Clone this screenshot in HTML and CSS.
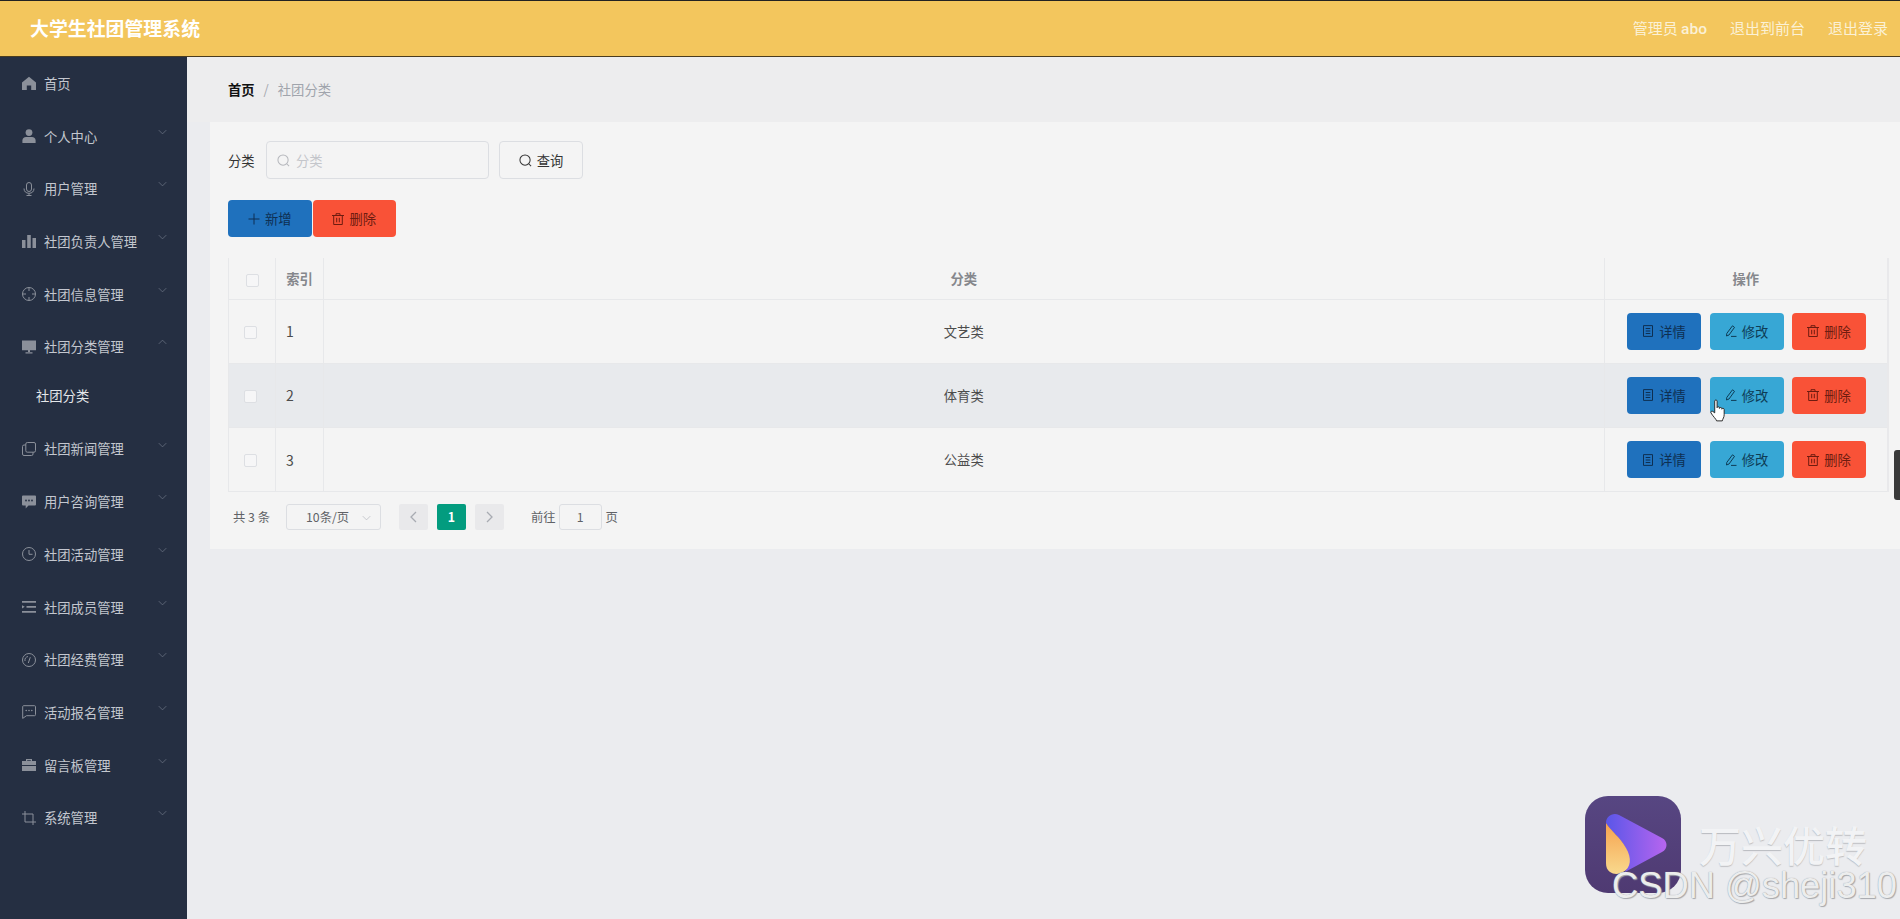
FILE: index.html
```html
<!DOCTYPE html>
<html lang="zh-CN">
<head>
  <meta charset="UTF-8" />
  <title>大学生社团管理系统</title>
  <link rel="stylesheet" href="styles.css">
</head>
<body>

  <!-- icon sprite -->
  <svg class="sprite" xmlns="http://www.w3.org/2000/svg">
    <symbol id="i-home" viewBox="0 0 14 14"><path fill="currentColor" d="M7 .8 14 6.600V14H9.200V9.400H4.800V14H0V6.600z"/></symbol>
    <symbol id="i-user" viewBox="0 0 14 14"><circle fill="currentColor" cx="7" cy="3.600" r="3.400"/><path fill="currentColor" d="M.4 14v-2.600C.4 9.400 2 8 4 8h6c2 0 3.600 1.400 3.600 3.400V14z"/></symbol>
    <symbol id="i-mic" viewBox="0 0 14 14"><g fill="none" stroke="currentColor"><rect x="4.500" y=".5" width="5" height="9" rx="2.500"/><path d="M2 6.500c0 3 2 4.800 5 4.800s5-1.800 5-4.800M7 11.300v2.200M4.500 13.500h5"/></g></symbol>
    <symbol id="i-data" viewBox="0 0 14 14"><path fill="currentColor" d="M0 6h3.500v8H0zM5.200 1h3.600v13H5.200zM10.500 4H14v10h-3.500z"/></symbol>
    <symbol id="i-aim" viewBox="0 0 14 14"><g fill="none" stroke="currentColor"><circle cx="7" cy="7" r="6.500"/><path d="M7 .5v3.500M7 10v3.500M.5 7H4M10 7h3.500"/></g></symbol>
    <symbol id="i-monitor" viewBox="0 0 14 14"><path fill="currentColor" d="M0 .5h14v9.800H0zM6 10.300h2v1.700H6zM3.500 12.300h7v1.200h-7z"/></symbol>
    <symbol id="i-copy" viewBox="0 0 14 14"><g fill="none" stroke="currentColor"><rect x="3.800" y=".5" width="9.700" height="9.700" rx="1.500"/><path d="M3.800 3H2a1.500 1.500 0 0 0-1.500 1.500V12A1.500 1.500 0 0 0 2 13.500h7.500A1.500 1.500 0 0 0 11 12v-1.800"/></g></symbol>
    <symbol id="i-chat" viewBox="0 0 14 14"><path fill="currentColor" d="M1 .5h12A1 1 0 0 1 14 1.500v8a1 1 0 0 1-1 1H6.500l-2.800 3v-3H1a1 1 0 0 1-1-1v-8A1 1 0 0 1 1 .5z"/><g fill="#252f42"><circle cx="4" cy="5.500" r=".9"/><circle cx="7" cy="5.500" r=".9"/><circle cx="10" cy="5.500" r=".9"/></g></symbol>
    <symbol id="i-clock" viewBox="0 0 14 14"><g fill="none" stroke="currentColor"><circle cx="7" cy="7" r="6.500"/><path d="M7 3v4.300h3.500"/></g></symbol>
    <symbol id="i-list" viewBox="0 0 14 14"><path fill="currentColor" d="M0 1h14v1.700H0zM4.500 6H14v1.700H4.500zM0 11h14v1.700H0zM0 5.200l2.800 1.600L0 8.500z"/></symbol>
    <symbol id="i-gauge" viewBox="0 0 14 14"><g fill="none" stroke="currentColor"><circle cx="7" cy="7" r="6.500"/><path d="M6.300 10 8.300 4.200"/><path d="M3 8a4 4 0 0 1 3-4.500"/></g></symbol>
    <symbol id="i-msg" viewBox="0 0 14 14"><path fill="none" stroke="currentColor" d="M1.500.7h11a1 1 0 0 1 1 1v8a1 1 0 0 1-1 1H4.500l-3.800 2.700V1.700a1 1 0 0 1 .8-1z"/><g fill="currentColor"><circle cx="4.200" cy="5.500" r=".8"/><circle cx="7" cy="5.500" r=".8"/><circle cx="9.800" cy="5.500" r=".8"/></g></symbol>
    <symbol id="i-case" viewBox="0 0 14 14"><path fill="currentColor" d="M4 3V1h6v2h4v4H0V3zM5.200 2.200V3h3.600v-.8zM0 8h14v5H0z"/></symbol>
    <symbol id="i-crop" viewBox="0 0 14 14"><path fill="none" stroke="currentColor" d="M3 0v11h11M0 3h11v11"/></symbol>
    <symbol id="i-arrow" viewBox="0 0 12 7"><path fill="none" stroke="currentColor" d="M1 1l5 5 5-5"/></symbol>
    <symbol id="i-prev" viewBox="0 0 7 12"><path fill="none" stroke="currentColor" stroke-width="1.300" d="M6 1 1 6l5 5"/></symbol>
    <symbol id="i-next" viewBox="0 0 7 12"><path fill="none" stroke="currentColor" stroke-width="1.300" d="M1 1l5 5-5 5"/></symbol>
    <symbol id="i-search" viewBox="0 0 14 14"><g fill="none" stroke="currentColor" stroke-width="1.100"><circle cx="6.500" cy="6.500" r="5.500"/><path d="M10.500 10.500l2.500 2.500"/></g></symbol>
    <symbol id="i-plus" viewBox="0 0 12 12"><path fill="none" stroke="currentColor" d="M6 .5v11M.5 6h11"/></symbol>
    <symbol id="i-trash" viewBox="0 0 12 12"><path fill="none" stroke="currentColor" d="M0 2.500h12M4 2.500V.7h4v1.800M1.700 2.500v9h8.600v-9M4.700 4.800v4.500M7.300 4.800v4.500"/></symbol>
    <symbol id="i-doc" viewBox="0 0 12 12"><path fill="none" stroke="currentColor" d="M1.500.6h9v10.800h-9zM3.700 3.500h4.600M3.700 6h4.600M3.700 8.500h4.600"/></symbol>
    <symbol id="i-edit" viewBox="0 0 12 12"><path fill="none" stroke="currentColor" d="M7.500.8l2 1.600L4 10 1.500 11l.3-2.600zM6 11.400h5.500"/></symbol>
  </svg>

  <!-- top bar -->
  <header class="topbar">
    <div class="brand">大学生社团管理系统</div>
    <div class="topbar-links">
      <span>管理员 <span class="admin-name">abo</span></span>
      <span>退出到前台</span>
      <span>退出登录</span>
    </div>
  </header>

  <div class="layout">

    <!-- side menu -->
    <nav class="sidebar">
      <div class="menu-item"><svg class="menu-icon"><use href="#i-home"/></svg>首页</div>
      <div class="menu-item"><svg class="menu-icon"><use href="#i-user"/></svg>个人中心<svg class="menu-arrow"><use href="#i-arrow"/></svg></div>
      <div class="menu-item"><svg class="menu-icon"><use href="#i-mic"/></svg>用户管理<svg class="menu-arrow"><use href="#i-arrow"/></svg></div>
      <div class="menu-item"><svg class="menu-icon"><use href="#i-data"/></svg>社团负责人管理<svg class="menu-arrow"><use href="#i-arrow"/></svg></div>
      <div class="menu-item"><svg class="menu-icon"><use href="#i-aim"/></svg>社团信息管理<svg class="menu-arrow"><use href="#i-arrow"/></svg></div>
      <div class="menu-item"><svg class="menu-icon"><use href="#i-monitor"/></svg>社团分类管理<svg class="menu-arrow open"><use href="#i-arrow"/></svg></div>
      <div class="submenu-item">社团分类</div>
      <div class="menu-item"><svg class="menu-icon"><use href="#i-copy"/></svg>社团新闻管理<svg class="menu-arrow"><use href="#i-arrow"/></svg></div>
      <div class="menu-item"><svg class="menu-icon"><use href="#i-chat"/></svg>用户咨询管理<svg class="menu-arrow"><use href="#i-arrow"/></svg></div>
      <div class="menu-item"><svg class="menu-icon"><use href="#i-clock"/></svg>社团活动管理<svg class="menu-arrow"><use href="#i-arrow"/></svg></div>
      <div class="menu-item"><svg class="menu-icon"><use href="#i-list"/></svg>社团成员管理<svg class="menu-arrow"><use href="#i-arrow"/></svg></div>
      <div class="menu-item"><svg class="menu-icon"><use href="#i-gauge"/></svg>社团经费管理<svg class="menu-arrow"><use href="#i-arrow"/></svg></div>
      <div class="menu-item"><svg class="menu-icon"><use href="#i-msg"/></svg>活动报名管理<svg class="menu-arrow"><use href="#i-arrow"/></svg></div>
      <div class="menu-item"><svg class="menu-icon"><use href="#i-case"/></svg>留言板管理<svg class="menu-arrow"><use href="#i-arrow"/></svg></div>
      <div class="menu-item"><svg class="menu-icon"><use href="#i-crop"/></svg>系统管理<svg class="menu-arrow"><use href="#i-arrow"/></svg></div>
    </nav>

    <main class="main">
      <div class="breadcrumb">
        <b>首页</b><span class="crumb-sep">/</span><span class="crumb-last">社团分类</span>
      </div>

      <section class="card">
        <div class="search-row">
          <label class="search-label">分类</label>
          <div class="search-input"><svg class="ico14"><use href="#i-search"/></svg>分类</div>
          <button class="search-btn"><svg class="ico14"><use href="#i-search"/></svg>查询</button>
        </div>

        <div class="action-row">
          <button class="btn btn-blue btn-top"><svg class="ico12"><use href="#i-plus"/></svg>新增</button>
          <button class="btn btn-red btn-top"><svg class="ico12"><use href="#i-trash"/></svg>删除</button>
        </div>

        <table class="grid">
          <colgroup>
            <col class="col-check"><col class="col-index"><col><col class="col-ops">
          </colgroup>
          <thead>
            <tr>
              <th><span class="check"></span></th>
              <th>索引</th>
              <th>分类</th>
              <th>操作</th>
            </tr>
          </thead>
          <tbody>
            <tr>
              <td><span class="check body-check"></span></td>
              <td class="cell-index">1</td>
              <td>文艺类</td>
              <td>
                <div class="ops">
                  <button class="btn btn-blue"><svg class="ico12"><use href="#i-doc"/></svg>详情</button>
                  <button class="btn btn-cyan"><svg class="ico12"><use href="#i-edit"/></svg>修改</button>
                  <button class="btn btn-red"><svg class="ico12"><use href="#i-trash"/></svg>删除</button>
                </div>
              </td>
            </tr>
            <tr class="row-hover">
              <td><span class="check body-check"></span></td>
              <td class="cell-index">2</td>
              <td>体育类</td>
              <td>
                <div class="ops">
                  <button class="btn btn-blue"><svg class="ico12"><use href="#i-doc"/></svg>详情</button>
                  <button class="btn btn-cyan"><svg class="ico12"><use href="#i-edit"/></svg>修改</button>
                  <button class="btn btn-red"><svg class="ico12"><use href="#i-trash"/></svg>删除</button>
                </div>
              </td>
            </tr>
            <tr>
              <td><span class="check body-check"></span></td>
              <td class="cell-index">3</td>
              <td>公益类</td>
              <td>
                <div class="ops">
                  <button class="btn btn-blue"><svg class="ico12"><use href="#i-doc"/></svg>详情</button>
                  <button class="btn btn-cyan"><svg class="ico12"><use href="#i-edit"/></svg>修改</button>
                  <button class="btn btn-red"><svg class="ico12"><use href="#i-trash"/></svg>删除</button>
                </div>
              </td>
            </tr>
          </tbody>
        </table>

        <div class="pager">
          <span class="pager-total">共 3 条</span>
          <div class="pager-size">10条/页<svg class="pager-caret"><use href="#i-arrow"/></svg></div>
          <span class="pager-btn"><svg class="pager-chevron"><use href="#i-prev"/></svg></span>
          <span class="pager-btn pager-current">1</span>
          <span class="pager-btn"><svg class="pager-chevron"><use href="#i-next"/></svg></span>
          <span class="pager-goto">前往</span>
          <span class="pager-input">1</span>
          <span>页</span>
        </div>
      </section>
    </main>
  </div>

  <!-- things lying over the page: scroll handle, mouse pointer, video watermark -->
  <div class="side-handle"></div>

  <svg class="pointer" viewBox="0 0 18 24">
    <path fill="#fff" stroke="#222" stroke-width="1" stroke-linejoin="round" d="M5 2c0-1.500 2.500-1.500 2.500 0v7c0-1.300 2.500-1.300 2.500 0v.8c0-1.300 2.500-1.300 2.500 0v.8c0-1.200 2.500-1.200 2.500.2v5.700c0 3-1.500 4-2 6.500H7c-.5-2-4-5-6-8.500-.7-1.300 1-2.500 2-1.500L5 14.500z"/>
  </svg>

  <div class="watermark">
    <svg class="wm-logo" viewBox="0 0 96 97">
      <defs>
        <linearGradient id="wm-bg" x1="0" y1="0" x2="0" y2="1"><stop offset="0" stop-color="#574682"/><stop offset="1" stop-color="#4f3a72"/></linearGradient>
        <linearGradient id="wm-play" x1="0" y1="0" x2="1" y2="0"><stop offset="0" stop-color="#5a56e8"/><stop offset="1" stop-color="#b765ef"/></linearGradient>
        <linearGradient id="wm-fold" x1="0" y1="0" x2="0" y2="1"><stop offset="0" stop-color="#f5a24f"/><stop offset="1" stop-color="#f9d98d"/></linearGradient>
      </defs>
      <rect width="96" height="97" rx="23" fill="url(#wm-bg)"/>
      <path fill="url(#wm-play)" d="M21 27c0-7 7-11 13-8l43 23c6 3 6 11 0 14L40 76c6-10 4-20-3-30-5-7-12-12-16-19z"/>
      <path fill="url(#wm-fold)" d="M21 27c5 8 14 14 20 25 6 10 5 20-3 24-3 2-9 3-13 0-3-2-4-5-4-9z"/>
    </svg>
    <div class="wm-name">万兴优转</div>
    <div class="wm-csdn">CSDN @sheji310</div>
  </div>

</body>
</html>
```

FILE: styles.css
```css
* {
  box-sizing: border-box;
}
html, body {
  height: 100%;
}
body {
  margin: 0;
  overflow: hidden;
  background: #ebecef;
  color: #444;
  font-family: "Noto Sans CJK SC", "Liberation Sans", sans-serif;
  font-size: 13.3px;
}
.sprite {
  display: none;
}

/* top bar */
.topbar {
  display: flex;
  justify-content: space-between;
  align-items: center;
  height: 57px;
  padding: 0 12px 2px 30px;
  background: #f3c65d;
  border-top: 1px solid #222;
  border-bottom: 1px solid #4a3c1e;
  color: #fff;
}
.brand {
  font-size: 18.900px;
  font-weight: bold;
}
.topbar-links {
  display: flex;
  gap: 23px;
  color: #fbf1d6;
  font-size: 15px;
}
.admin-name {
  font-family: Roboto, "Liberation Sans", sans-serif;
  font-size: 15.500px;
  font-weight: 500;
}

.layout {
  display: flex;
  height: calc(100% - 57px);
}

/* side menu */
.sidebar {
  flex: 0 0 187px;
  background: #252f42;
  color: #c3c7cf;
}
.menu-item {
  position: relative;
  display: flex;
  align-items: center;
  height: 52.7px;
  padding-left: 22px;
}
.menu-icon {
  width: 14px;
  height: 14px;
  margin-right: 8px;
  color: #8b909a;
}
.menu-arrow {
  position: absolute;
  right: 20px;
  top: 19px;
  width: 9px;
  height: 6px;
  color: #6e7685;
}
.menu-arrow.open {
  transform: rotate(180deg);
}
.submenu-item {
  display: flex;
  align-items: center;
  height: 49.5px;
  padding: 0 0 4px 36px;
  color: #e4e7ea;
}

/* main part */
.main {
  flex: 1;
  min-width: 0;
}
.breadcrumb {
  display: flex;
  align-items: center;
  height: 65px;
  padding: 0 0 1px 41px;
  background: #ededee;
  color: #111;
}
.crumb-sep {
  margin: 0 9px;
  color: #a5a8af;
}
.crumb-last {
  color: #a0a4ac;
}
.card {
  margin-left: 23px;
  height: 427px;
  padding: 19px 12px 0 18px;
  background: #f4f4f4;
}

/* search */
.search-row {
  display: flex;
  align-items: center;
  height: 38px;
}
.search-label {
  width: 38px;
  color: #333;
}
.search-input {
  display: flex;
  align-items: center;
  gap: 6px;
  width: 223px;
  height: 38px;
  padding-left: 10px;
  border: 1px solid #dcdee2;
  border-radius: 4px;
  color: #c4c6cb;
}
.search-input .ico14 {
  color: #b5b7bc;
}
.search-btn {
  display: flex;
  align-items: center;
  justify-content: center;
  gap: 5px;
  width: 84px;
  height: 38px;
  margin-left: 10px;
  background: transparent;
  border: 1px solid #dcdee2;
  border-radius: 4px;
  color: #333;
  font: inherit;
}
.ico14 {
  width: 13px;
  height: 13px;
}
.ico12 {
  width: 12px;
  height: 12px;
}

/* buttons */
.action-row {
  display: flex;
  gap: 1px;
  margin-top: 21px;
  margin-bottom: 21px;
}
.btn {
  display: flex;
  align-items: center;
  justify-content: center;
  gap: 5px;
  width: 74px;
  height: 37px;
  padding: 0;
  border: 0;
  border-radius: 4px;
  font: inherit;
}
.btn-top {
  width: 83.500px;
}
.btn-blue {
  background: #1f71bd;
  color: #0e2f52;
}
.btn-cyan {
  background: #37a7d5;
  color: #0e3c55;
}
.btn-red {
  background: #f95237;
  color: #6e1c10;
}

/* table */
.grid {
  width: 1661px;
  table-layout: fixed;
  border-collapse: collapse;
  border-right: 2px solid #e9e9eb;
}
.col-check {
  width: 47px;
}
.col-index {
  width: 48px;
}
.col-ops {
  width: 284px;
}
.grid th, .grid td {
  border: 1px solid #e7e8ea;
  border-top: 0;
  padding: 0;
  text-align: center;
}
.grid th {
  height: 41px;
  color: #85878c;
  font-weight: bold;
}
.grid thead tr {
  border-bottom: 1px solid #dfe1e4;
}
.grid td {
  height: 64.300px;
  color: #4c4c4c;
}
.grid td.cell-index {
  text-align: left;
  padding-left: 10px;
  font-size: 14px;
}
.row-hover td {
  background: #e8eaed;
}
.check {
  display: inline-block;
  width: 13px;
  height: 13px;
  vertical-align: middle;
  border: 1px solid #dddfe3;
  border-radius: 2px;
  background: #f6f6f7;
}
.body-check {
  margin-right: 3px;
  margin-bottom: 2px;
}
.ops {
  display: flex;
  justify-content: flex-end;
  gap: 8.500px;
  padding-right: 21px;
}

/* pagination */
.pager {
  display: flex;
  align-items: center;
  height: 26px;
  margin-top: 12px;
  padding-left: 5px;
  color: #606266;
  font-size: 12.300px;
}
.pager-total {
  width: 53px;
}
.pager-size {
  position: relative;
  width: 95px;
  height: 26px;
  padding-left: 19px;
  line-height: 24px;
  border: 1px solid #dcdee2;
  border-radius: 3px;
}
.pager-caret {
  position: absolute;
  right: 9px;
  top: 10px;
  width: 9px;
  height: 6px;
  color: #b8bbc1;
}
.pager-btn {
  display: flex;
  align-items: center;
  justify-content: center;
  width: 29px;
  height: 26px;
  margin-right: 9px;
  background: #e9e9eb;
  border-radius: 2px;
  color: #a8abb2;
}
.pager-chevron {
  width: 7px;
  height: 12px;
}
.pager-size + .pager-btn {
  margin-left: 18px;
}
.pager-current {
  background: #039c7f;
  color: #fff;
  font-weight: bold;
}
.pager-goto {
  margin-left: 18px;
  margin-right: 3px;
}
.pager-input {
  width: 43px;
  height: 26px;
  margin-right: 4px;
  line-height: 24px;
  text-align: center;
  border: 1px solid #dcdee2;
  border-radius: 3px;
}

/* overlays */
.side-handle {
  position: absolute;
  left: 1894px;
  top: 450px;
  width: 6px;
  height: 50px;
  background: #3a3a3a;
  border-radius: 3px 0 0 3px;
}
.pointer {
  position: absolute;
  left: 1710px;
  top: 399px;
  width: 17px;
  height: 23px;
}
.watermark {
  position: absolute;
  left: 1585px;
  top: 796px;
  width: 315px;
  height: 120px;
}
.wm-logo {
  display: block;
  width: 96px;
  height: 97px;
}
.wm-name {
  position: absolute;
  left: 114px;
  top: 20px;
  color: #f2f3f5;
  font-size: 42px;
  font-weight: 500;
  line-height: 56px;
  text-shadow: 0 1px 1px #b9bbbf;
}
.wm-csdn {
  position: absolute;
  left: 27px;
  top: 69px;
  color: #eceded;
  font-family: "Liberation Sans", sans-serif;
  font-size: 36.300px;
  line-height: 42px;
  white-space: nowrap;
  text-shadow: 0 0 1px #8d8f94, 1px 1px 1px #a9abaf;
}
```
